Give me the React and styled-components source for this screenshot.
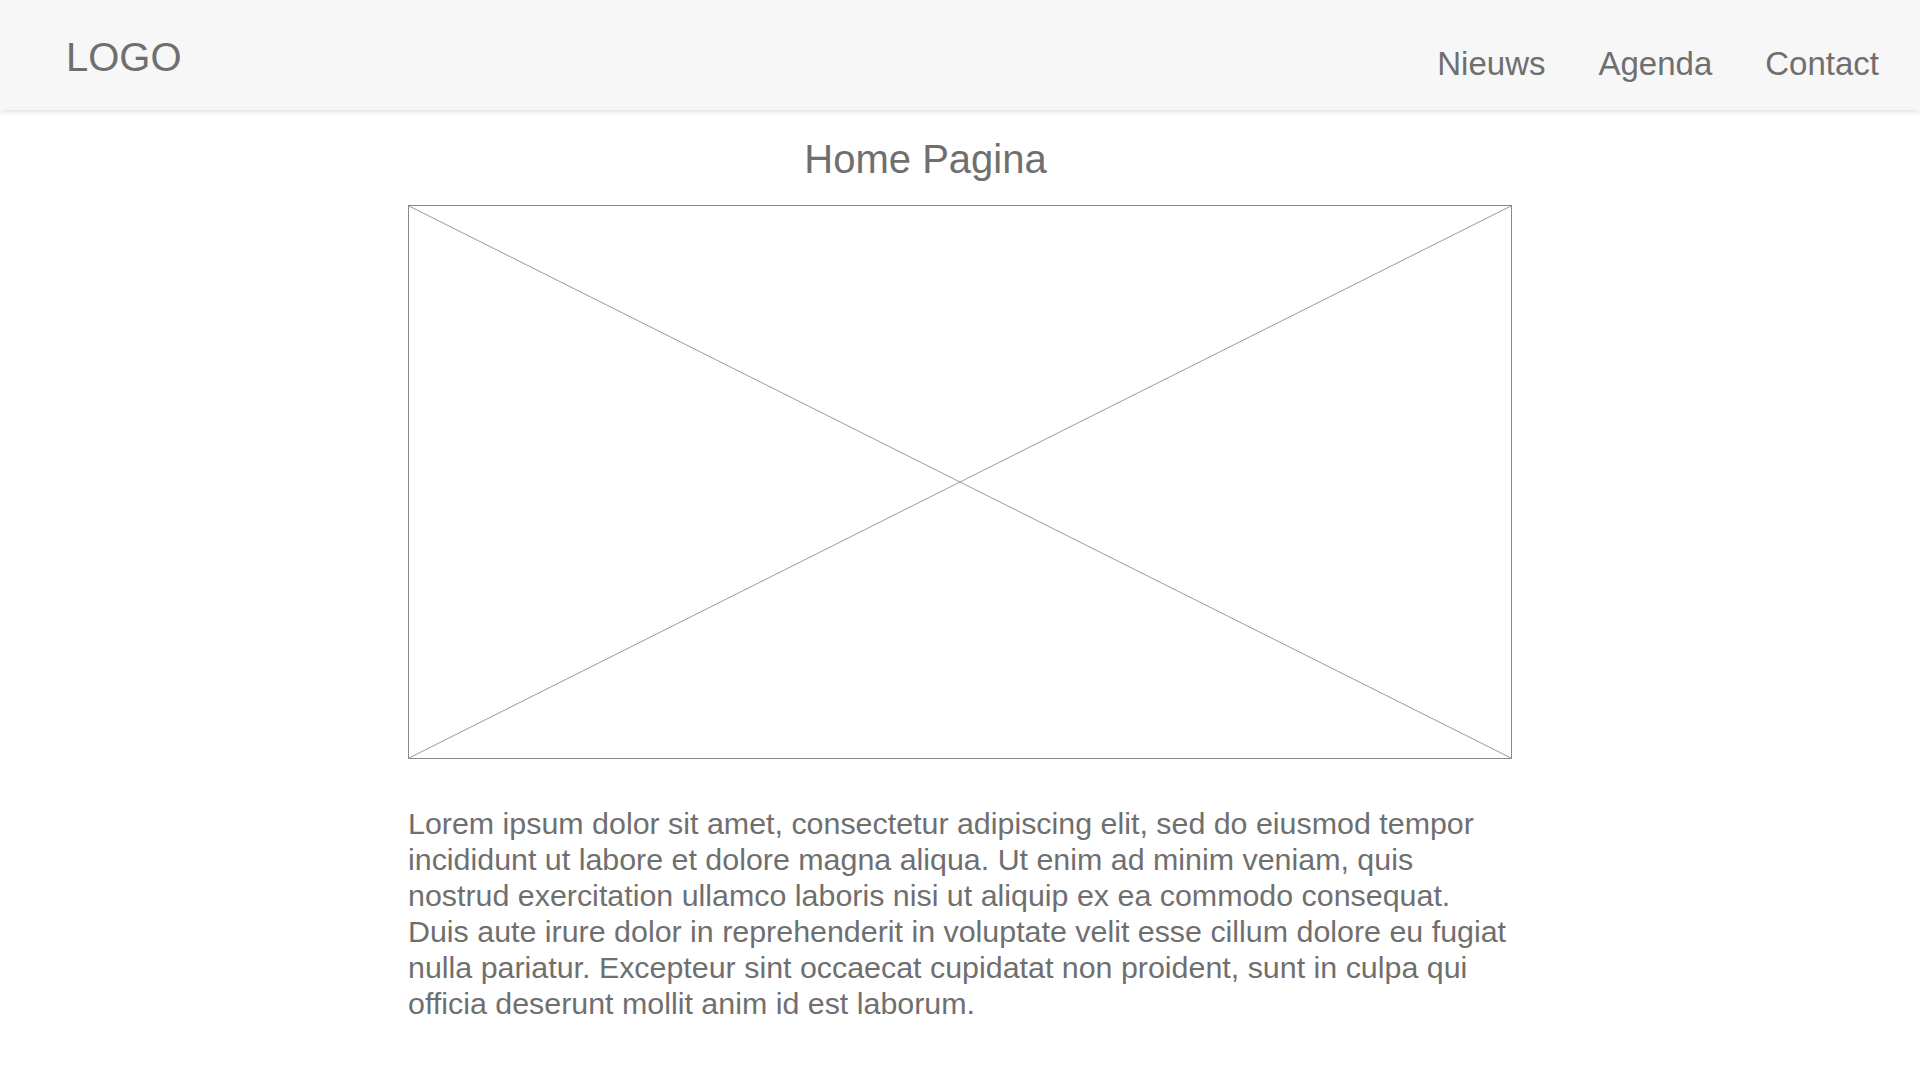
import React from "react";
import styled, { createGlobalStyle } from "styled-components";

const GlobalStyle = createGlobalStyle`
  html, body {
    margin: 0;
    padding: 0;
    background: #ffffff;
  }
  body {
    font-family: "Liberation Sans", Arial, Helvetica, sans-serif;
    color: #6f6f6f;
  }
`;

const Header = styled.header`
  height: 110px;
  box-sizing: border-box;
  padding: 0 41px 0 66px;
  display: flex;
  justify-content: space-between;
  align-items: flex-start;
  background: #f7f7f7;
  box-shadow: 0 2px 5px rgba(0, 0, 0, 0.12);
`;

const Logo = styled.div`
  margin-top: 34px;
  font-size: 40px;
  line-height: 46px;
  color: #6f6f6f;
`;

const Nav = styled.nav`
  margin-top: 45px;
  display: flex;
  gap: 53px;
`;

const NavLink = styled.a`
  font-size: 33px;
  line-height: 38px;
  color: #6f6f6f;
  text-decoration: none;
  cursor: pointer;
`;

const Main = styled.main`
  width: 1104px;
  margin: 0 auto;
  padding-top: 26px;
  display: flex;
  flex-direction: column;
`;

const Title = styled.h1`
  margin: 0 69px 23px 0;
  font-size: 40px;
  line-height: 46px;
  font-weight: 400;
  text-align: center;
  color: #6f6f6f;
`;

const Placeholder = styled.div`
  width: 1104px;
  height: 554px;
  box-sizing: border-box;
  border: 1px solid #888888;
  svg {
    display: block;
    width: 100%;
    height: 100%;
  }
`;

const Body = styled.p`
  margin: 46px 0 0;
  font-size: 30.4px;
  line-height: 36px;
  color: #6f6f6f;
`;

const App = () => {
  return (
    <>
      <GlobalStyle />
      <Header>
        <Logo>LOGO</Logo>
        <Nav>
          <NavLink>Nieuws</NavLink>
          <NavLink>Agenda</NavLink>
          <NavLink>Contact</NavLink>
        </Nav>
      </Header>
      <Main>
        <Title>Home Pagina</Title>
        <Placeholder>
          <svg viewBox="0 0 100 100" preserveAspectRatio="none">
            <line x1="0" y1="0" x2="100" y2="100" stroke="#999999" strokeWidth="1" vectorEffect="non-scaling-stroke" />
            <line x1="100" y1="0" x2="0" y2="100" stroke="#999999" strokeWidth="1" vectorEffect="non-scaling-stroke" />
          </svg>
        </Placeholder>
        <Body>
          Lorem ipsum dolor sit amet, consectetur adipiscing elit, sed do eiusmod tempor
          incididunt ut labore et dolore magna aliqua. Ut enim ad minim veniam, quis
          nostrud exercitation ullamco laboris nisi ut aliquip ex ea commodo consequat.
          Duis aute irure dolor in reprehenderit in voluptate velit esse cillum dolore eu fugiat
          nulla pariatur. Excepteur sint occaecat cupidatat non proident, sunt in culpa qui
          officia deserunt mollit anim id est laborum.
        </Body>
      </Main>
    </>
  );
};

export default App;
